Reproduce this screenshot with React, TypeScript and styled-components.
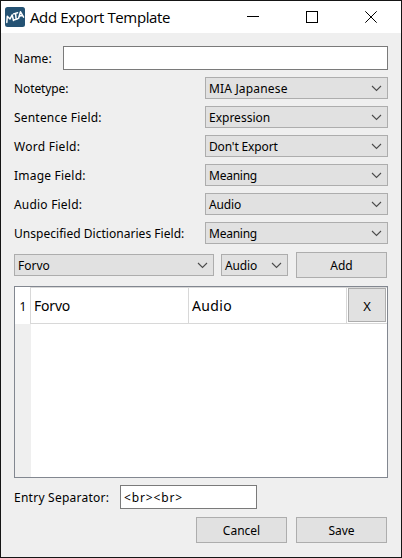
import React from "react";
import styled, { createGlobalStyle } from "styled-components";

const GlobalStyle = createGlobalStyle`
  * { box-sizing: border-box; }
  body { margin: 0; background: #efefef; }
`;

const Window = styled.div`
  width: 402px;
  height: 558px;
  border: 1px solid #151515;
  background: #efefef;
  color: #000;
  font: 12px/16px "Noto Sans", sans-serif;
  display: flex;
  flex-direction: column;
  white-space: nowrap;
`;

const TitleBar = styled.header`
  height: 32px;
  flex: none;
  background: #fff;
  display: flex;
  align-items: center;
  padding-left: 4px;
`;

const Title = styled.h1`
  margin: 0 auto 0 5px;
  font: 400 15px/20px "Open Sans", sans-serif;
  letter-spacing: -0.37px;
`;

const CaptionIcon = styled.svg`
  width: 12px;
  height: 12px;
  margin-right: 47px;
  stroke: #000;
  fill: none;
  &:last-child { margin-right: 24px; }
`;

const Body = styled.main`
  padding: 13px 13px 0;
  display: flex;
  flex-direction: column;
`;

const Text = styled.span<{ $spacing?: number }>`
  letter-spacing: ${(p) => p.$spacing ?? 0}px;
`;

const Label = styled(Text)`
  padding-top: 2px;
`;

const NameRow = styled.div`
  display: flex;
  align-items: center;
  height: 24px;
  margin-bottom: 7px;
`;

const Input = styled.input<{ $width: number }>`
  width: ${(p) => p.$width}px;
  height: 24px;
  margin: 0 0 0 auto;
  padding: 0 3px;
  border: 1px solid #7a7a7a;
  border-radius: 0;
  outline: none;
  background: #fff;
  color: #000;
  font: inherit;
  letter-spacing: 0.85px;
`;

const Fields = styled.div`
  display: flex;
  flex-direction: column;
  gap: 7px;
`;

const FieldRow = styled.div`
  height: 22px;
  display: flex;
  align-items: center;
  justify-content: space-between;
`;

const Combo = styled.div<{ $width: number }>`
  width: ${(p) => p.$width}px;
  height: 22px;
  padding: 0 5px 0 3px;
  border: 1px solid #adadad;
  background: #e1e1e1;
  display: flex;
  align-items: center;
  justify-content: space-between;
`;

const AddRow = styled.div`
  display: flex;
  align-items: center;
  height: 26px;
  margin: 8px 0;
`;

const AddCombo = styled(Combo)`
  margin-right: 7px;
`;

const Button = styled.button`
  width: 91px;
  height: 26px;
  padding: 1px 0 0;
  border: 1px solid #adadad;
  border-radius: 0;
  background: #e1e1e1;
  color: #000;
  font: inherit;
`;

const AddButton = styled(Button)`
  margin-left: 1px;
`;

const Table = styled.div`
  height: 192px;
  border: 1px solid #828790;
  background: #fff;
  display: grid;
  grid-template-columns: 16px 158px 158px 40px;
  grid-template-rows: 37px 1fr;
`;

const RowNumber = styled.div`
  border-right: 1px solid #d8d8d8;
  display: flex;
  align-items: center;
  justify-content: center;
  padding: 3px 0 0 1px;
`;

const Cell = styled.div`
  border: solid #d8d8d8;
  border-width: 1px 1px 1px 0;
  padding: 1px 0 0 3px;
  display: flex;
  align-items: center;
  font-size: 14px;
`;

const ActionCell = styled.div`
  border: solid #d8d8d8;
  border-width: 1px 0;
  padding-left: 1px;
`;

const RemoveButton = styled(Button)`
  width: 38px;
  height: 34px;
  display: block;
  font-size: 13px;
`;

const HeaderGutter = styled.div`
  background: #efefef;
`;

const SeparatorRow = styled.div`
  display: flex;
  align-items: center;
  height: 24px;
  width: 243px;
  margin-top: 7px;
`;

const Actions = styled.div`
  display: flex;
  justify-content: flex-end;
  gap: 9px;
  margin: 8px 1px 0 0;
`;

const Chevron = () => (
  <svg width="11" height="8" viewBox="0 0 11 8" fill="none" stroke="#4b4b4b" strokeWidth="1.1">
    <path d="M1 2 5.5 6.5 10 2" />
  </svg>
);

const Logo = () => (
  <svg width="20" height="20" viewBox="0 0 20 20">
    <rect width="20" height="20" rx="2.5" fill="#245273" />
    <g fill="none" stroke="#fff" strokeWidth="1.5" strokeLinecap="round" strokeLinejoin="round">
      <path d="M1.8 15.4 2.3 9.3 5 12 7.2 7.9 8.5 13.5" />
      <path d="M8.6 6.9 12.6 5.7M10.6 6.4 11.1 12.2M9.5 12.8 12.8 11.8" />
      <path d="M13.6 11.3 15.5 4.8 18.6 10.2M14.5 9.2 17.4 8.1" />
    </g>
  </svg>
);

const fields: [string, number, string, number][] = [
  ["Notetype:", -0.1, "MIA Japanese", 0.17],
  ["Sentence Field:", 0.2, "Expression", 0],
  ["Word Field:", 0.27, "Don't Export", -0.15],
  ["Image Field:", 0.22, "Meaning", -0.25],
  ["Audio Field:", 0.2, "Audio", -0.15],
  ["Unspecified Dictionaries Field:", 0.03, "Meaning", -0.25],
];

export default function App() {
  return (
    <>
      <GlobalStyle />
      <Window>
        <TitleBar>
          <Logo />
          <Title>Add Export Template</Title>
          <CaptionIcon viewBox="0 0 12 12"><path d="M0 5.5H12" /></CaptionIcon>
          <CaptionIcon viewBox="0 0 12 12"><rect x=".5" y=".5" width="11" height="11" /></CaptionIcon>
          <CaptionIcon viewBox="0 0 12 12"><path d="M.3.3 11.7 11.7M11.7.3.3 11.7" /></CaptionIcon>
        </TitleBar>
        <Body>
          <NameRow>
            <Label $spacing={0.15}>Name:</Label>
            <Input $width={325} aria-label="Name" />
          </NameRow>
          <Fields>
            {fields.map(([label, labelSpacing, value, valueSpacing]) => (
              <FieldRow key={label}>
                <Label $spacing={labelSpacing}>{label}</Label>
                <Combo $width={183}>
                  <Label $spacing={valueSpacing}>{value}</Label>
                  <Chevron />
                </Combo>
              </FieldRow>
            ))}
          </Fields>
          <AddRow>
            <AddCombo $width={200}><Label>Forvo</Label><Chevron /></AddCombo>
            <AddCombo $width={67}><Label $spacing={-0.15}>Audio</Label><Chevron /></AddCombo>
            <AddButton><Text>Add</Text></AddButton>
          </AddRow>
          <Table>
            <RowNumber>1</RowNumber>
            <Cell><Text $spacing={-0.2}>Forvo</Text></Cell>
            <Cell><Text $spacing={0.35}>Audio</Text></Cell>
            <ActionCell><RemoveButton>X</RemoveButton></ActionCell>
            <HeaderGutter />
          </Table>
          <SeparatorRow>
            <Label $spacing={0.25}>Entry Separator:</Label>
            <Input $width={137} defaultValue="<br><br>" aria-label="Entry separator" />
          </SeparatorRow>
          <Actions>
            <Button><Text>Cancel</Text></Button>
            <Button><Text>Save</Text></Button>
          </Actions>
        </Body>
      </Window>
    </>
  );
}
